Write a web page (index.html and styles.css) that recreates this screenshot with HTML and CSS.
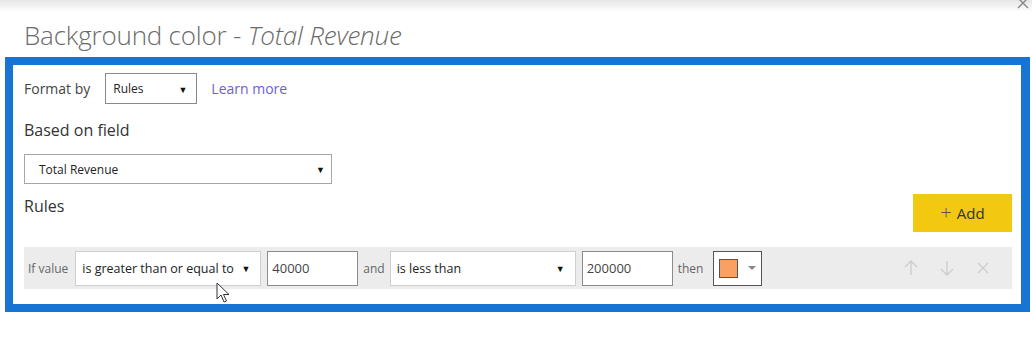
FILE: index.html
```html
<!DOCTYPE html>
<html lang="en">
<head>
	<meta charset="UTF-8">
	<title>Background color - Total Revenue</title>
	<link rel="stylesheet" href="styles.css">
</head>
<body>
	<div class="topbar"></div>
	<svg class="close" width="14" height="14" viewBox="0 0 14 14">
		<path d="M2 0 L12 10 M12 0 L2 10" stroke="#888" stroke-width="1.4"/>
	</svg>
	<h1 class="title">Background color - <em>Total Revenue</em></h1>
	<div class="panel">
		<div class="format-row">
			<span class="label">Format by</span>
			<div class="select select-rules">Rules<span class="caret">&#9660;</span></div>
			<a class="learn" href="#">Learn more</a>
		</div>
		<div class="heading field-head">Based on field</div>
		<div class="select select-field">Total Revenue<span class="caret">&#9660;</span></div>
		<div class="rules-head">
			<div class="heading">Rules</div>
			<div class="add-btn"><span class="plus">+</span>Add</div>
		</div>
		<div class="rule">
			<span class="rule-txt">If value</span>
			<div class="select rule-select">is greater than or equal to<span class="caret">&#9660;</span></div>
			<div class="rule-input">40000</div>
			<span class="rule-txt">and</span>
			<div class="select rule-select">is less than<span class="caret">&#9660;</span></div>
			<div class="rule-input">200000</div>
			<span class="rule-txt">then</span>
			<div class="picker"><span class="swatch"></span><span class="picker-caret"></span></div>
			<div class="tools">
				<svg width="14" height="16" viewBox="0 0 14 16"><path d="M7 15 V1 M1 7 L7 1 L13 7" fill="none" stroke="#cdcdcd" stroke-width="1.3"/></svg>
				<svg width="14" height="16" viewBox="0 0 14 16"><path d="M7 1 V15 M1 9 L7 15 L13 9" fill="none" stroke="#cdcdcd" stroke-width="1.3"/></svg>
				<svg width="14" height="16" viewBox="0 0 14 16"><path d="M2 3 L12 13 M12 3 L2 13" fill="none" stroke="#cdcdcd" stroke-width="1.3"/></svg>
			</div>
		</div>
		<!-- mouse pointer over the first select -->
		<svg class="cursor" width="16" height="22" viewBox="0 0 16 22">
			<path d="M1 1 L1 17 L5 13 L8 20 L10.5 19 L7.5 12.5 L13 12.5 Z" fill="#fff" stroke="#333" stroke-width="1" stroke-linejoin="round"/>
		</svg>
	</div>
</body>
</html>
```

FILE: styles.css
```css
*{box-sizing: border-box;}
body{margin: 0;font-family: "Open Sans", "Liberation Sans", sans-serif;color: #333;background: #fff;position: relative;width: 1032px;height: 344px;overflow: hidden;}
.topbar{height: 12px;background: linear-gradient(#e6e6e6, #fff);}
.close{position: absolute;right: 2px;top: -2px;}
.title{margin: 7px 0 0 24px;height: 38px;font-size: 26px;font-weight: 300;color: #6b6b6b;letter-spacing: -0.2px;line-height: 32px;}
.title em{font-style: italic;}
.panel{position: relative;margin-left: 5px;width: 1025px;border: 8px solid #1874d2;border-right-width: 9px;padding: 8px 9px 15px 11px;}
.format-row{display: flex;align-items: center;height: 31px;}
.label{font-size: 14px;color: #444;margin-right: 15px;}
.select{position: relative;border: 1px solid #8a8a8a;background: #fff;font-size: 12px;color: #222;display: flex;align-items: center;}
.caret{position: absolute;right: 9px;top: 50%;transform: translateY(-50%);font-size: 9px;color: #111;}
.select-rules{width: 92px;height: 31px;padding-left: 7px;}
.learn{margin-left: 14px;font-size: 14px;color: #6d5ddb;text-decoration: none;}
.heading{font-size: 16px;line-height: 22px;color: #333;}
.field-head{margin-top: 15px;}
.select-field{margin-top: 13px;width: 308px;height: 30px;padding-left: 14px;border-color: #a6a6a6;}
.select-field .caret{right: 6px;}
.rules-head{display: flex;justify-content: space-between;align-items: flex-start;margin-top: 10px;}
.rules-head .heading{margin-top: 1px;}
.add-btn{width: 99px;height: 38px;background: #f2c811;display: flex;align-items: center;justify-content: center;font-size: 15px;color: #333;}
.plus{font-size: 20px;font-weight: 300;margin-right: 5px;color: #555;line-height: 1;}
.rule{display: flex;align-items: center;margin-top: 15px;height: 42px;background: #ececec;padding-left: 4px;}
.rule-txt{font-size: 12px;color: #666;margin-right: 5px;}
.rule-txt:first-child{margin-right: 7px;}
.rule-select{width: 186px;height: 35px;padding-left: 6px;font-size: 12.5px;border-color: #cfcfcf;margin-right: 6px;}
.rule-select .caret{right: 10px;}
.rule-input{width: 91px;height: 35px;border: 1px solid #8c8c8c;background: #fff;font-size: 13px;color: #444;display: flex;align-items: center;padding-left: 4px;margin-right: 5px;}
.picker{width: 49px;height: 35px;border: 1px solid #555;background: #fff;display: flex;align-items: center;padding-left: 5px;margin-left: 5px;}
.swatch{width: 19px;height: 19px;background: #f9a062;border: 1px solid #555;}
.picker-caret{margin-left: 10px;width: 0;height: 0;border-left: 4px solid transparent;border-right: 4px solid transparent;border-top: 4px solid #888;}
.tools{margin-left: auto;display: flex;gap: 22px;margin-right: 22px;}
.cursor{position: absolute;left: 203px;top: 217px;}
```
